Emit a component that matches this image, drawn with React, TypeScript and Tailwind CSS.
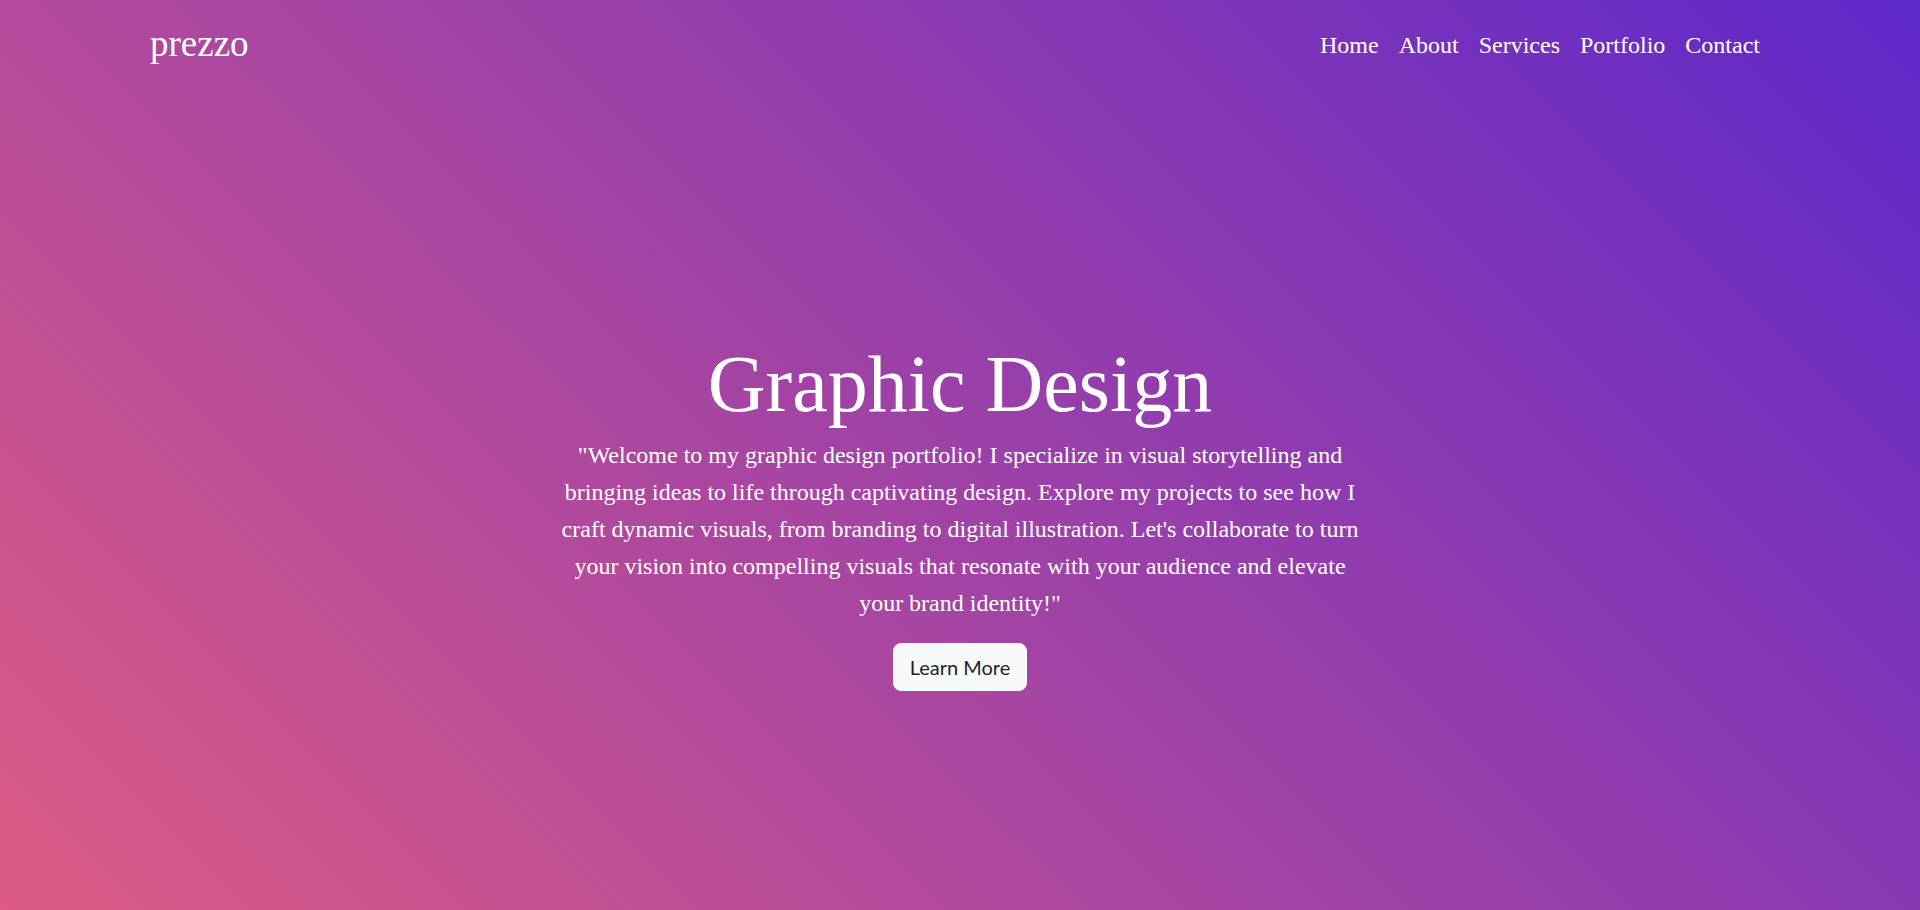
const NAV_LINKS = ['Home', 'About', 'Services', 'Portfolio', 'Contact']

export default function App() {
  return (
    <div className="min-h-[910px] w-full bg-[linear-gradient(45deg,#dd5b84,#5e28ca)] text-white font-['Liberation_Serif','Times_New_Roman',serif]">
      <header className="flex items-start justify-between pl-[150px] pr-[160px] pt-[25px]">
        <a href="#" className="text-[37px] leading-none">
          prezzo
        </a>
        <nav className="mt-[8px] flex gap-[20px] text-[24px] leading-none">
          {NAV_LINKS.map((link) => (
            <a key={link} href="#">
              {link}
            </a>
          ))}
        </nav>
      </header>

      <main className="flex flex-col items-center pt-[274px] text-center">
        <h1 className="text-[80px] leading-[96px]">Graphic Design</h1>
        <p className="mt-[5px] max-w-[810px] text-[24px] leading-[37px]">
          "Welcome to my graphic design portfolio! I specialize in visual storytelling and bringing ideas to
          life through captivating design. Explore my projects to see how I craft dynamic visuals, from
          branding to digital illustration. Let's collaborate to turn your vision into compelling visuals that
          resonate with your audience and elevate your brand identity!"
        </p>
        <button className="mt-[21px] rounded-[8px] border border-[#f8f9fa] bg-[#f8f9fa] px-[16px] py-[8px] font-['Lato','Noto_Sans',sans-serif] text-[20px] leading-[30px] text-[#212529]">
          Learn More
        </button>
      </main>
    </div>
  )
}
